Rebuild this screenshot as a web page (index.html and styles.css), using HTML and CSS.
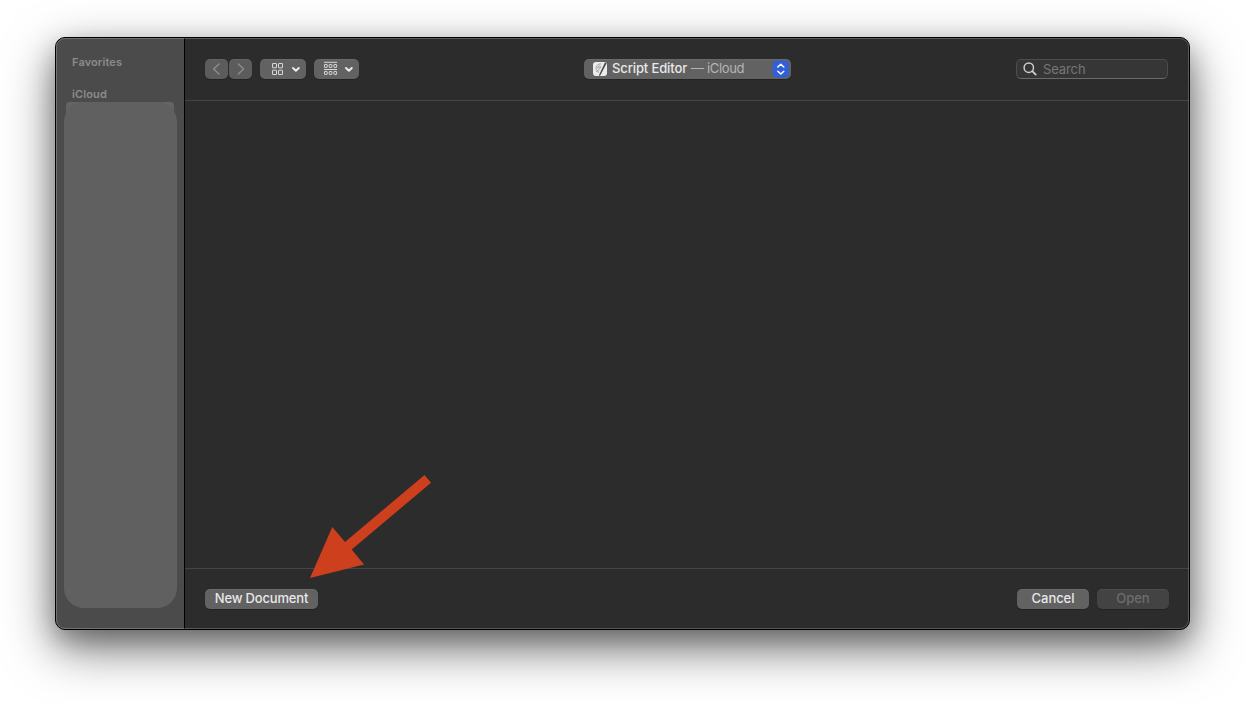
FILE: index.html
```
<!DOCTYPE html>
<html lang="en">
<head>
<meta charset="utf-8">
<title>Open</title>
<link rel="stylesheet" href="styles.css">
</head>
<body>
<div class="dialog">
  <aside class="sidebar">
    <h2 class="heading">Favorites</h2>
    <h2 class="heading heading-cloud">iCloud</h2>
    <div class="places"><div class="places-body"></div></div>
  </aside>
  <main class="main">
    <header class="toolbar">
      <div class="tools">
        <button class="btn nav" aria-label="Back"><svg width="23" height="20" viewBox="0 0 23 20"><path d="M14 5L8.600 10L14 15" fill="none" stroke="#8e8e8e" stroke-width="1.300" stroke-linecap="round" stroke-linejoin="round"/></svg></button>
        <button class="btn nav" aria-label="Forward"><svg width="23" height="20" viewBox="0 0 23 20"><path d="M9.300 5L14.700 10L9.300 15" fill="none" stroke="#8e8e8e" stroke-width="1.300" stroke-linecap="round" stroke-linejoin="round"/></svg></button>
        <button class="btn view" aria-label="Icon view"><svg width="46" height="20" viewBox="0 0 46 20" fill="none"><g stroke="#d8d8d8"><rect x="12.500" y="4.500" width="4" height="4.300" rx=".3"/><rect x="18.500" y="4.500" width="4" height="4.300" rx=".3"/><rect x="12.500" y="11.200" width="4" height="4.300" rx=".3"/><rect x="18.500" y="11.200" width="4" height="4.300" rx=".3"/></g><path d="M33 9L35.900 11.700L38.800 9" stroke="#eee" stroke-width="1.900" stroke-linecap="round" stroke-linejoin="round"/></svg></button>
        <button class="btn group" aria-label="Group by"><svg width="45" height="20" viewBox="0 0 45 20" fill="none"><g stroke="#d8d8d8"><path d="M10 3.300h13M10 10.500h13" stroke-width="1"/><rect x="10.500" y="5.500" width="2.700" height="2.900" rx=".3"/><rect x="15.200" y="5.500" width="2.700" height="2.900" rx=".3"/><rect x="19.900" y="5.500" width="2.700" height="2.900" rx=".3"/><rect x="10.500" y="12.500" width="2.700" height="2.900" rx=".3"/><rect x="15.200" y="12.500" width="2.700" height="2.900" rx=".3"/><rect x="19.900" y="12.500" width="2.700" height="2.900" rx=".3"/></g><path d="M32 9L34.900 11.700L37.800 9" stroke="#eee" stroke-width="1.900" stroke-linecap="round" stroke-linejoin="round"/></svg></button>
      </div>
      <div class="btn location">
        <svg class="app-icon" width="16" height="16" viewBox="0 0 16 16"><rect x="1" y="1" width="14" height="14" rx="3" fill="#ececec"/><path d="M9.300 3C6 2.500 4 5 4 7.500c0 2.500 2 2.500 3.500.5S9 4.500 7 5.200S5 8 7.500 6.500M4.200 10.500l3 .6" fill="none" stroke="#8a8a8a" stroke-width=".8"/><path d="M13 1.300L7.300 13.500L7 15.300L8.400 14.200L14.500 2.500z" fill="#484b50"/></svg>
        <span class="location-name">Script Editor</span><span class="location-place">— iCloud</span>
        <svg class="stepper" width="18" height="18" viewBox="0 0 18 18"><rect x=".5" y=".5" width="16.500" height="17" rx="4.500" fill="#315fd8"/><path d="M5.800 7L8.800 4.200L11.800 7M5.800 11.200L8.800 14L11.800 11.200" fill="none" stroke="#fff" stroke-width="1.500" stroke-linecap="round" stroke-linejoin="round"/></svg>
      </div>
      <label class="search"><svg width="14" height="14" viewBox="0 0 14 14"><circle cx="5.800" cy="5.700" r="4.700" fill="none" stroke="#ccc" stroke-width="1.500"/><path d="M9.300 9.200L12.700 12.600" stroke="#ccc" stroke-width="1.900" stroke-linecap="round"/></svg><span class="search-text">Search</span></label>
    </header>
    <section class="files"></section>
    <footer class="footer">
      <button class="btn new"><span class="label new-text">New Document</span></button>
      <button class="btn action"><span class="label">Cancel</span></button>
      <button class="btn action disabled"><span class="label">Open</span></button>
    </footer>
  </main>
  <svg class="arrow" width="124" height="106" viewBox="0 0 124 106"><path d="M118.500 0L125 7.700L45.700 74.500L58 89.500L4 103L26.300 52L39 67z" fill="#ce401d"/></svg>
</div>
</body>
</html>
```
FILE: styles.css
```
* { box-sizing: border-box; }
body {
  margin: 0;
  padding: 37px 55px;
  height: 703px;
  overflow: hidden;
  background: #fff;
  font: 500 13px/20px Inter, "Liberation Sans", sans-serif;
}
.dialog {
  position: relative;
  display: flex;
  width: 1135px;
  height: 593px;
  border: 1px solid #000;
  border-radius: 10px;
  background: #2c2c2c;
  box-shadow: 0 18px 50px rgba(0, 0, 0, .54), 0 10px 24px rgba(0, 0, 0, .25);
}
.dialog::after {
  content: "";
  position: absolute;
  inset: 0;
  border: 1px solid rgba(255, 255, 255, .21);
  border-radius: 9px;
  pointer-events: none;
}
.sidebar {
  width: 129px;
  padding: 16px 7px 0 8px;
  border-right: 1px solid #000;
  border-radius: 9px 0 0 9px;
  background: #4b4b4b;
}
.heading {
  margin: 0 0 16px 8px;
  font-size: 11px;
  font-weight: 600;
  line-height: 16px;
  letter-spacing: .12px;
  color: #8b8b8b;
}
.heading-cloud { margin-bottom: 0; }
.places {
  width: 108px;
  height: 30px;
  margin-left: 2px;
  border-radius: 4px;
  background: linear-gradient(#666, #5c5c5c 14px);
}
.places-body {
  width: 113px;
  height: 506px;
  margin-left: -2px;
  border-radius: 20px;
  background: #606060;
}
.main { flex: 1; display: flex; flex-direction: column; }
.toolbar {
  display: grid;
  grid-template-columns: 379px 207px 1fr;
  align-items: start;
  height: 63px;
  padding: 21px 21px 0 20px;
  border-bottom: 1px solid #454545;
}
.tools { display: flex; }
.btn {
  display: flex;
  align-items: center;
  justify-content: center;
  height: 20px;
  padding: 0;
  border: 0;
  border-radius: 5px;
  background: #626262;
  box-shadow: inset 0 1px 0 rgba(255, 255, 255, .05), 0 1px 1px rgba(0, 0, 0, .22);
  font: inherit;
  color: #e8e8e8;
}
.btn svg { flex: none; }
.label { padding-bottom: 1px; line-height: 19px; letter-spacing: -.05px; }
.nav { width: 23px; margin-right: 1px; background: #5c5c5c; }
.view { width: 46px; margin: 0 8px 0 7px; }
.group { width: 45px; }
.location { justify-content: flex-start; padding: 0 1px 0 8px; }
.app-icon { margin-right: 4px; }
.location-name, .location-place { padding-bottom: 1px; line-height: 19px; white-space: nowrap; }
.location-name { letter-spacing: -.12px; }
.location-place { margin-left: 4px; font-weight: 400; letter-spacing: -.35px; color: #b5b5b5; }
.stepper { margin-left: auto; }
.search {
  display: flex;
  align-items: center;
  justify-self: end;
  width: 152px;
  height: 20px;
  padding-left: 6px;
  border: 1px solid #4d4d4d;
  border-bottom-color: #6b6b6b;
  border-radius: 5px;
  background: #363636;
  color: #777;
}
.search-text { margin-left: 6px; font-weight: 400; letter-spacing: -.1px; }
.files { flex: 1; }
.footer {
  display: flex;
  gap: 8px;
  height: 61px;
  padding: 20px 20px 0;
  border-top: 1px solid #454545;
}
.new { width: 113px; margin-right: auto; }
.new-text { letter-spacing: -.18px; }
.action { width: 72px; }
.disabled { background: #434343; color: #6d6d6d; }
.arrow { position: absolute; left: 250px; top: 437px; overflow: visible; }
```
